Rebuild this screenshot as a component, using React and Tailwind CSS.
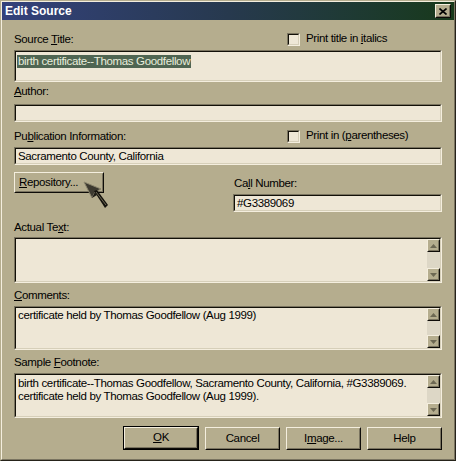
import React from "react";

const BG = "bg-[#b5ad8e]";

function Sunken({ className = "", inner = "", children }) {
  return (
    <div
      className={`border border-t-[#7a7460] border-l-[#7a7460] border-b-[#f4eede] border-r-[#f4eede] ${className}`}
    >
      <div
        className={`h-full border border-t-[#121008] border-l-[#121008] border-b-[#d6cfb9] border-r-[#d6cfb9] bg-[#eee7d6] ${inner}`}
      >
        {children}
      </div>
    </div>
  );
}

function Raised({ className = "", children, isDefault = false }) {
  const body = (
    <div className="h-full border border-t-[#f4eede] border-l-[#f4eede] border-b-[#0e0c08] border-r-[#0e0c08]">
      <div className="h-full border border-t-transparent border-l-transparent border-b-[#7a7460] border-r-[#7a7460] flex items-center justify-center">
        {children}
      </div>
    </div>
  );
  if (isDefault) {
    return <div className={`border border-black ${className}`}>{body}</div>;
  }
  return <div className={className}>{body}</div>;
}

function Arrow({ up }) {
  return (
    <Raised className={`h-[13px] w-[13px] ${BG}`}>
      <svg width="7" height="4" viewBox="0 0 7 4">
        {up ? (
          <polygon points="3.5,0 7,4 0,4" fill="#6d6853" />
        ) : (
          <polygon points="0,0 7,0 3.5,4" fill="#6d6853" />
        )}
      </svg>
    </Raised>
  );
}

function ScrollBar() {
  return (
    <div className="w-[13px] flex flex-col bg-[#ddd7c6]">
      <Arrow up />
      <div className="flex-1" />
      <Arrow />
    </div>
  );
}

function CheckBox({ children }) {
  return (
    <div className="flex items-center h-[14px]">
      <Sunken className="w-[13px] h-[13px]" />
      <span className="ml-[6px]">{children}</span>
    </div>
  );
}

function Label({ className = "", children }) {
  return <div className={`h-[14px] leading-[14px] ${className}`}>{children}</div>;
}

export default function App() {
  return (
    <div className="w-[456px] h-[461px] font-['Liberation_Sans',Arial,sans-serif] text-[11.5px] tracking-[-0.35px] text-black">
      <div className="relative w-full h-full bg-[#b5ad8e] border border-t-[#b5ad8e] border-l-[#b5ad8e] border-r-[#26231a] border-b-[#26231a]">
        <div className="h-full border border-t-[#f4eede] border-l-[#f4eede] border-r-[#7a7460] border-b-[#7a7460] flex flex-col">
          {/* title bar */}
          <div className="h-[18px] bg-gradient-to-r from-[#34417c] via-[#27394e] to-[#18391a] flex items-center justify-between pl-[3px] pr-[3px]">
            <span className="text-white font-bold text-[12px] tracking-normal">Edit Source</span>
            <Raised className={`w-[16px] h-[14px] ${BG}`}>
              <svg width="8" height="7" viewBox="0 0 8 7">
                <path d="M0.5 0.5 L7.5 6.5 M7.5 0.5 L0.5 6.5" stroke="#000" strokeWidth="1.6" />
              </svg>
            </Raised>
          </div>

          <div className="px-[12px] flex flex-col">
            <div className="mt-[12px] h-[14px] flex justify-between">
              <Label>
                Source <u>T</u>itle:
              </Label>
              <div className="w-[155px]">
                <CheckBox>
                  Print title in <u>i</u>talics
                </CheckBox>
              </div>
            </div>
            <Sunken className="mt-[4px] h-[32px]" inner="pl-[1px] pt-[1px]">
              <span className="bg-[#4f6552] text-[#e9eedc] leading-[13px] inline-block px-[1px]">
                birth certificate--Thomas Goodfellow
              </span>
            </Sunken>

            <Label className="mt-[2px]">
              <u>A</u>uthor:
            </Label>
            <Sunken className="mt-[6px] h-[18px]" />

            <div className="mt-[7px] h-[14px] flex justify-between">
              <Label>
                Pu<u>b</u>lication Information:
              </Label>
              <div className="w-[155px]">
                <CheckBox>
                  Print in (<u>p</u>arentheses)
                </CheckBox>
              </div>
            </div>
            <Sunken className="mt-[4px] h-[18px]" inner="pl-[2px] leading-[14px]">
              Sacramento County, California
            </Sunken>

            <div className="flex items-start">
              <Raised className={`mt-[7px] w-[90px] h-[21px] ${BG}`}>
                <span className="w-full pl-[3px]">
                  <u>R</u>epository...
                </span>
              </Raised>
              <div className="ml-auto w-[209px] flex flex-col">
                <Label className="mt-[11px] pl-[1px]">
                  Ca<u>l</u>l Number:
                </Label>
                <Sunken className="mt-[4px] h-[18px]" inner="pl-[2px] leading-[14px]">
                  #G3389069
                </Sunken>
              </div>
            </div>

            <Label className="mt-[8px]">
              Actual Te<u>x</u>t:
            </Label>
            <Sunken className="mt-[3px] h-[46px]" inner="flex">
              <div className="flex-1" />
              <ScrollBar />
            </Sunken>

            <Label className="mt-[5px]">
              <u>C</u>omments:
            </Label>
            <Sunken className="mt-[4px] h-[44px]" inner="flex">
              <div className="flex-1 pl-[2px] pt-[1px] leading-[13px]">
                certificate held by Thomas Goodfellow (Aug 1999)
              </div>
              <ScrollBar />
            </Sunken>

            <Label className="mt-[5px]">
              Sample <u>F</u>ootnote:
            </Label>
            <Sunken className="mt-[4px] h-[45px]" inner="flex">
              <div className="flex-1 pl-[2px] pt-[2px] leading-[13px]">
                birth certificate--Thomas Goodfellow, Sacramento County, California, #G3389069.
                <br />
                certificate held by Thomas Goodfellow (Aug 1999).
              </div>
              <ScrollBar />
            </Sunken>

            <div className="mt-[8px] flex justify-end gap-[6px]">
              <Raised isDefault className={`w-[76px] h-[24px] ${BG}`}>
                <u>O</u>K
              </Raised>
              <Raised className={`w-[75px] h-[23px] mt-[1px] ${BG}`}>Cancel</Raised>
              <Raised className={`w-[75px] h-[23px] mt-[1px] ${BG}`}>
                I<u>m</u>age...
              </Raised>
              <Raised className={`w-[75px] h-[23px] mt-[1px] ${BG}`}>Help</Raised>
            </div>
          </div>
        </div>

        {/* mouse pointer over the Repository button */}
        <svg
          className="absolute left-[81px] top-[180px]"
          width="28"
          height="30"
          viewBox="0 0 28 30"
        >
          <polygon points="2,1 19,8 13,11 10,17" fill="#3d3a30" stroke="#8d876f" strokeWidth="1" />
          <polygon points="12,10 15,9 26,24 23,27" fill="#14120c" />
          <line x1="14" y1="11" x2="24" y2="24" stroke="#6f6a56" strokeWidth="1" />
          <polygon points="10,17 13,11 15,14" fill="#1d1b15" />
        </svg>
      </div>
    </div>
  );
}
